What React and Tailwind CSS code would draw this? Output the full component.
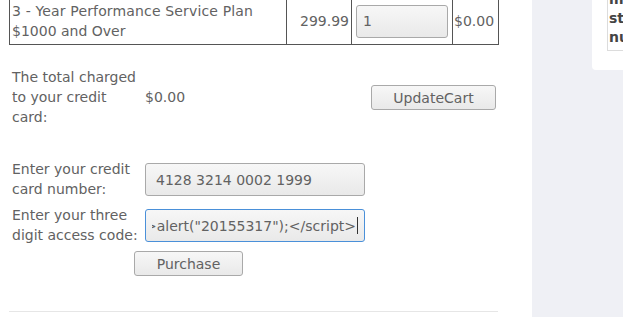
export default function App() {
  const inputCls =
    "h-[33px] rounded-[3px] border border-[#a9a9a9] bg-gradient-to-b from-[#f7f7f7] to-[#e9e9e9] flex items-center overflow-hidden";
  return (
    <div className="flex w-[623px] h-[317px] overflow-hidden bg-white font-['DejaVu_Sans',sans-serif] text-[14px] leading-[20px] text-[#626262]">
      <div className="w-[532px] shrink-0 flex flex-col pl-[9px]">
        {/* table row */}
        <div className="-mt-[2px] w-[490px] h-[47px] grid grid-cols-[276px_65px_101px_1fr] border-l border-r border-b border-[#555]">
          <div className="flex flex-col justify-center px-[2px]">
            <div className="tracking-[0.15px]">3 - Year Performance Service Plan</div>
            <div>$1000 and Over</div>
          </div>
          <div className="border-l border-[#555] flex items-center justify-end pr-[2px]">299.99</div>
          <div className="border-l border-[#555] flex items-center px-[4px]">
            <div className={inputCls + " w-[92px] pl-[6px]"}>1</div>
          </div>
          <div className="border-l border-[#555] flex items-center pl-[1px]">$0.00</div>
        </div>

        {/* total row */}
        <div className="mt-[22px] flex items-start">
          <div className="w-[136px] pl-[3px] pr-[6px]">The total charged to your credit card:</div>
          <div className="mt-[20px] w-[130px]">$0.00</div>
          <button className="ml-[96px] mt-[18px] w-[125px] h-[25px] rounded-[3px] border border-[#a9a9a9] bg-gradient-to-b from-[#f7f7f7] to-[#e9e9e9] text-[14px] leading-[20px] text-[#626262]">
            UpdateCart
          </button>
        </div>

        {/* credit card */}
        <div className="mt-[32px] flex items-start">
          <div className="w-[136px] pl-[3px]">Enter your credit card number:</div>
          <div className={inputCls + " mt-[4px] w-[220px] pl-[10px]"}>4128 3214 0002 1999</div>
        </div>
        <div className="mt-[6px] flex items-start">
          <div className="w-[136px] pl-[3px]">Enter your three digit access code:</div>
          <div className="mt-[4px] w-[220px] h-[33px] rounded-[3px] border border-[#4a90d9] bg-gradient-to-b from-[#f7f7f7] to-[#e9e9e9] flex items-center px-[6px]">
            <div className="flex-1 flex items-center justify-end overflow-hidden whitespace-nowrap">
              <span className="shrink-0">&lt;script&gt;alert("20155317");&lt;/script&gt;</span>
              <span className="shrink-0 ml-[1px] inline-block w-px h-[17px] bg-[#333]"></span>
            </div>
          </div>
        </div>
        <div className="mt-[6px] pl-[125px]">
          <button className="w-[109px] h-[25px] rounded-[3px] border border-[#a9a9a9] bg-gradient-to-b from-[#f7f7f7] to-[#e9e9e9] text-[14px] leading-[20px] text-[#626262]">
            Purchase
          </button>
        </div>
        <div className="mt-[35px] w-[489px] h-px bg-[#e6e6e6]"></div>
      </div>

      {/* right panel */}
      <div className="flex-1 bg-[#eff0f5] pl-[60px]">
        <div className="h-[80px] bg-white rounded-bl-[4px] pl-[15px]">
          <div className="-mt-[10px] border-l border-b border-[#dcdcdc] pl-[1px] pb-[3px] font-bold text-[#444] leading-[19px] whitespace-nowrap overflow-hidden">
            <div>must</div>
            <div>string</div>
            <div>number</div>
          </div>
        </div>
      </div>
    </div>
  );
}
